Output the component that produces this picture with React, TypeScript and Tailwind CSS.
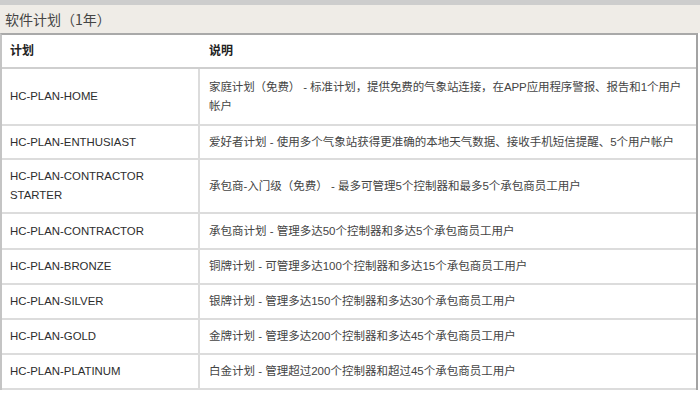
import React from 'react';

const plans: { id: React.ReactNode; desc: React.ReactNode; h: string }[] = [
  { id: 'HC-PLAN-HOME', desc: <>家庭计划（免费） -  标准计划，提供免费的气象站连接，在APP应用程序警报、报告和1个用户<br />帐户</>, h: 'h-[57px]' },
  { id: 'HC-PLAN-ENTHUSIAST', desc: '爱好者计划 - 使用多个气象站获得更准确的本地天气数据、接收手机短信提醒、5个用户帐户', h: 'h-[34px]' },
  { id: <>HC-PLAN-CONTRACTOR<br />STARTER</>, desc: '承包商-入门级（免费） - 最多可管理5个控制器和最多5个承包商员工用户', h: 'h-[54px]' },
  { id: 'HC-PLAN-CONTRACTOR', desc: '承包商计划 - 管理多达50个控制器和多达5个承包商员工用户', h: 'h-[36px]' },
  { id: 'HC-PLAN-BRONZE', desc: '铜牌计划 - 可管理多达100个控制器和多达15个承包商员工用户', h: 'h-[35px]' },
  { id: 'HC-PLAN-SILVER', desc: '银牌计划 - 管理多达150个控制器和多达30个承包商员工用户', h: 'h-[35px]' },
  { id: 'HC-PLAN-GOLD', desc: '金牌计划 - 管理多达200个控制器和多达45个承包商员工用户', h: 'h-[35px]' },
  { id: 'HC-PLAN-PLATINUM', desc: '白金计划 - 管理超过200个控制器和超过45个承包商员工用户', h: 'h-[35px]' },
];

export default function App() {
  return (
    <div className="w-[700px] h-[393px] bg-white overflow-hidden font-['Liberation_Sans','Noto_Sans_CJK_SC',sans-serif] text-[#333]">
      <div className="h-[5px] bg-[#cdcdcd]" />
      <div className="h-[28px] bg-[#efece7] flex items-center pl-[5px] text-[14px] text-[#444] font-['Noto_Sans_CJK_SC',sans-serif]">
        软件计划（1年）
      </div>

      <div className="w-[698px] border-t-2 border-l-2 border-r-2 border-t-[#a9a9a9] border-l-[#c4c4c4] border-r-[#a3a3a3] text-[11.5px] leading-[19px]">
        <div className="h-[34px] flex border-b-2 border-[#cfcfcf] font-bold text-[12px] text-[#222]">
          <div className="w-[198px] pl-[8px] flex items-center">计划</div>
          <div className="flex-1 pl-[9px] flex items-center">说明</div>
        </div>
        {plans.map((p, i) => (
          <div key={i} className={`${p.h} flex border-b-2 border-[#dcdcdc]`}>
            <div className="w-[198px] shrink-0 pl-[8px] flex items-center border-r-2 border-[#dcdcdc] text-[#2d2d2d] text-[11.4px]">
              <div>{p.id}</div>
            </div>
            <div className="flex-1 pl-[9px] flex items-center text-[#444] whitespace-nowrap">
              <div className={i === 0 ? 'tracking-[-0.1px]' : ''}>{p.desc}</div>
            </div>
          </div>
        ))}
      </div>
    </div>
  );
}
